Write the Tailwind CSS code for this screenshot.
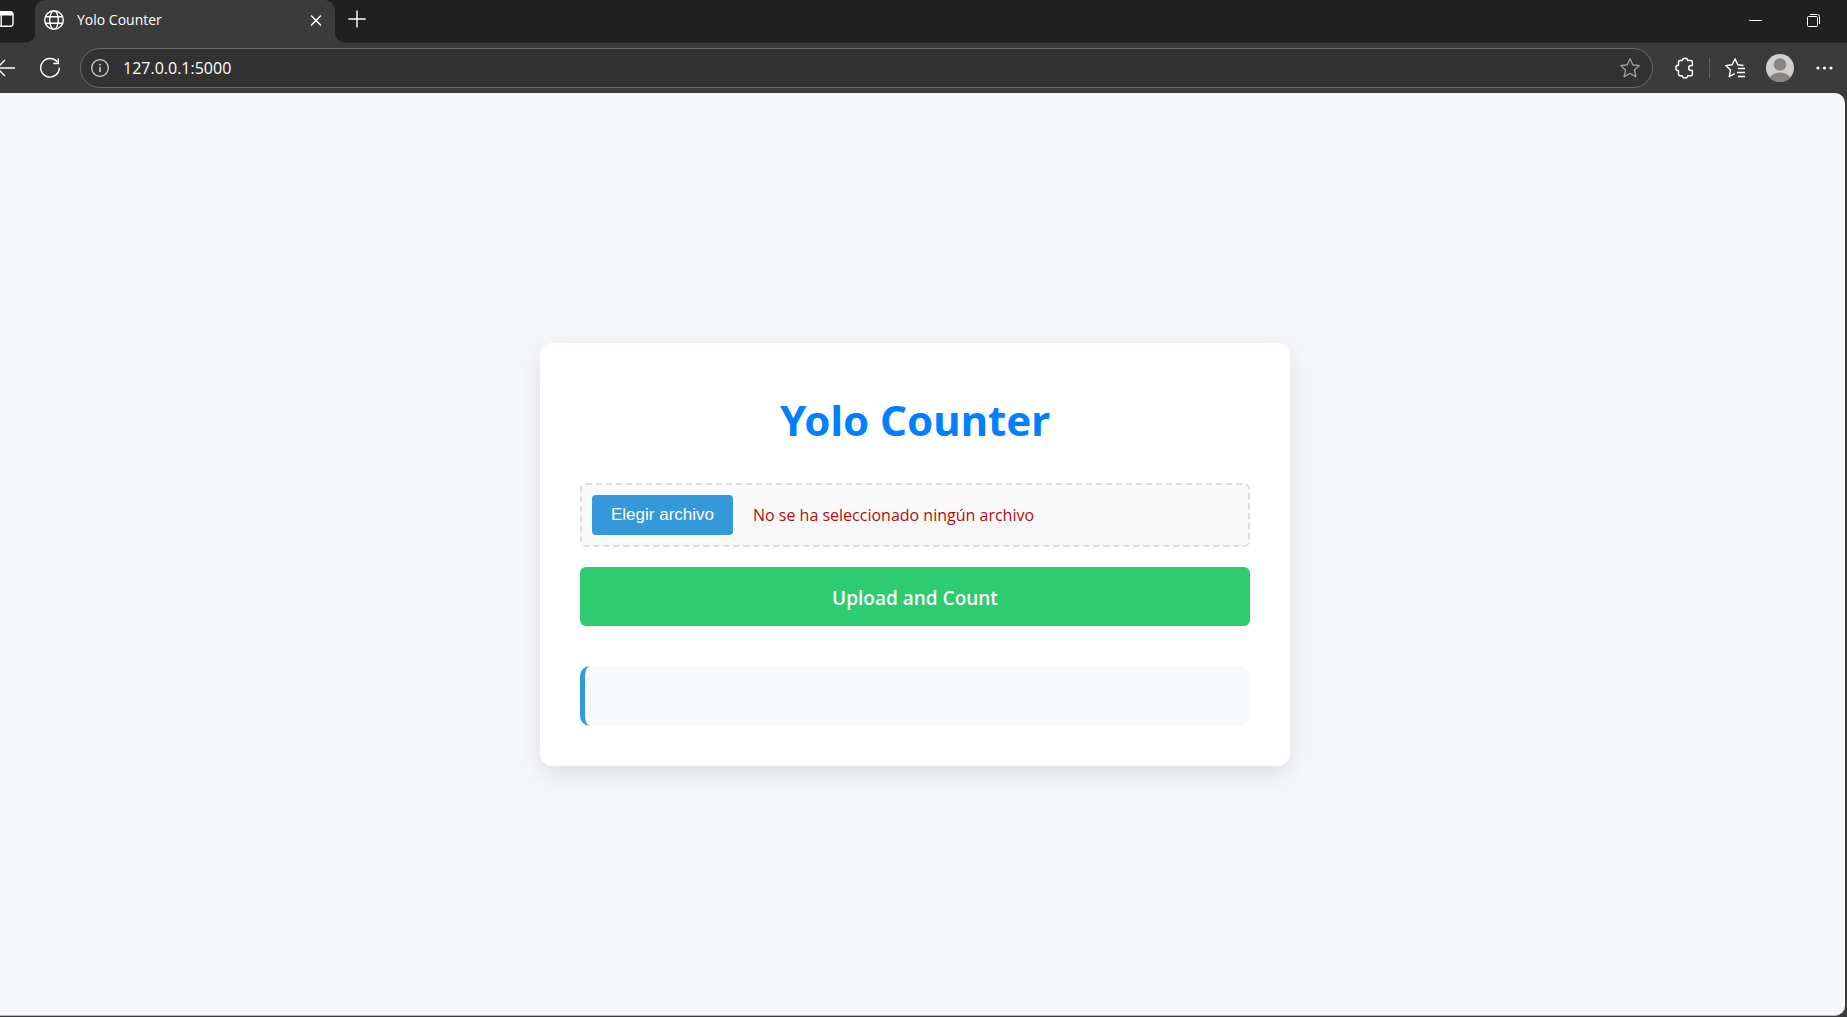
<!DOCTYPE html>
<html lang="es">
<head>
    <meta charset="UTF-8">
    <meta name="viewport" content="width=device-width, initial-scale=1.0">
    <title>Yolo Counter</title>
    <script src="https://cdn.jsdelivr.net/npm/@tailwindcss/browser@4"></script>
</head>
<body class="bg-[#3b3b3b] h-screen flex flex-col overflow-hidden font-['Open_Sans','Noto_Sans',sans-serif]">
    <header class="shrink-0 text-white">
        <!-- Tab strip -->
        <div class="flex h-[43px]">
            <div class="w-[35px] bg-[#202020] rounded-br-[10px] border-b border-[#2c2c2c] flex items-center">
                <button type="button" aria-label="Tab actions" class="pb-1">
                    <svg class="w-4 h-5" viewBox="0 0 16 20" fill="none" stroke="#fff" stroke-width="1.4">
                        <path d="M-3 2.7h13.5a2.500 2.500 0 0 1 2.500 2.500v9.600a2.500 2.500 0 0 1-2.500 2.500H-3"/>
                        <path d="M-3 3.800H12.500M-3 5.500H13" stroke-width="2"/>
                        <path d="M1.200 6v11"/>
                    </svg>
                </button>
            </div>
            <div class="w-[300px] bg-[#202020]">
                <div class="h-full bg-[#3b3b3b] rounded-t-[10px] flex items-center pl-2 pr-[11px] pb-[3px]">
                    <svg class="w-[22px] h-[22px]" viewBox="0 0 22 22" fill="none" stroke="#fff" stroke-width="1.4">
                        <circle cx="11" cy="11" r="9.300"/>
                        <ellipse cx="11" cy="11" rx="4.300" ry="9.300"/>
                        <path d="M2.500 7.700h17M2.500 14.300h17"/>
                    </svg>
                    <span class="ml-3 flex-1 text-[14px] leading-5">Yolo Counter</span>
                    <button type="button" aria-label="Close tab">
                        <svg class="w-4 h-4" viewBox="0 0 16 16" fill="none" stroke="#fff" stroke-width="1.5">
                            <path d="M3 3.500l10 10M13 3.500l-10 10"/>
                        </svg>
                    </button>
                </div>
            </div>
            <div class="flex-1 bg-[#202020] rounded-bl-[10px] border-b border-[#2c2c2c] flex items-center pl-3 pr-[26px] pb-1">
                <button type="button" aria-label="New tab">
                    <svg class="w-5 h-5" viewBox="0 0 20 20" fill="none" stroke="#fff" stroke-width="1.400">
                        <path d="M10 1.500v17M1.300 10h17.400"/>
                    </svg>
                </button>
                <button type="button" aria-label="Minimize" class="ml-auto">
                    <svg class="w-4 h-4" viewBox="0 0 16 16" fill="none" stroke="#fff">
                        <path d="M2 9.500h13"/>
                    </svg>
                </button>
                <button type="button" aria-label="Restore" class="ml-[42px]">
                    <svg class="w-4 h-4" viewBox="0 0 16 16" fill="none" stroke="#fff">
                        <rect x="2.500" y="5.500" width="10" height="10" rx="1"/>
                        <path d="M5 3.500h7.500a2 2 0 0 1 2 2V13"/>
                    </svg>
                </button>
            </div>
        </div>

        <!-- Toolbar -->
        <div class="flex items-center h-[50px] pr-[13px]">
            <button type="button" aria-label="Back">
                <svg class="w-4 h-5" viewBox="0 0 16 20" fill="none" stroke="#fff" stroke-width="1.400">
                    <path d="M15 10H-3M5 2l-8 8 8 8"/>
                </svg>
            </button>
            <button type="button" aria-label="Reload" class="ml-[23px]">
                <svg class="w-[22px] h-[22px]" viewBox="0 0 22 22" fill="none" stroke="#fff" stroke-width="1.400">
                    <path d="M18.500 5.300A9.300 9.300 0 1 0 20.300 10.500"/>
                    <path d="M19.300 1.500v5h-5"/>
                </svg>
            </button>
            <div class="ml-[19px] flex-1 h-10 rounded-full bg-[#323232] border border-[#6b6b6b] flex items-center pl-[9px] pr-[11px]">
                <svg class="w-5 h-5" viewBox="0 0 20 20" fill="none" stroke="#d6d6d6" stroke-width="1.300">
                    <circle cx="10" cy="10" r="8.300"/>
                    <path d="M10 9v5M10 6v1.600" stroke-width="1.500"/>
                </svg>
                <input type="text" value="127.0.0.1:5000" aria-label="Address" class="ml-[13px] flex-1 text-[16px] leading-6 outline-none">
                <button type="button" aria-label="Add to favorites">
                    <svg class="w-[22px] h-[22px]" viewBox="0 0 22 22" fill="none" stroke="#9d9d9d" stroke-width="1.400" stroke-linejoin="round">
                        <path d="M11 1.800l2.800 6 6.500.8-4.800 4.500 1.300 6.600L11 16.500l-5.800 3.200 1.300-6.600L1.700 8.600l6.500-.8z"/>
                    </svg>
                </button>
            </div>
            <button type="button" aria-label="Extensions" class="ml-[21px]">
                <svg class="w-[22px] h-[22px]" viewBox="0 0 22 22" fill="none" stroke="#fff" stroke-width="1.400" stroke-linejoin="round">
                    <path d="M8.300 3.500a2.700 2.200 0 0 1 5.400 0h3.200a1.500 1.500 0 0 1 1.500 1.500v3.500h-1.200a2.500 2.500 0 0 0 0 5h1.200v3.800a1.500 1.500 0 0 1-1.500 1.500h-3.200a2.700 2.200 0 0 1-5.400 0H6a1.500 1.500 0 0 1-1.500-1.500v-3.600a2.700 2.700 0 0 1 0-5.400V5A1.500 1.500 0 0 1 6 3.500z"/>
                </svg>
            </button>
            <div class="ml-[13px] w-px h-5 bg-[#5e5e5e]"></div>
            <button type="button" aria-label="Favorites" class="ml-[14px]">
                <svg class="w-[22px] h-[22px]" viewBox="0 0 22 22" fill="none" stroke="#fff" stroke-width="1.400" stroke-linejoin="round">
                    <path d="M19.500 8.500l-5.700-.7L11 1.800l-2.800 6-6.500.8 4.800 4.500-1.300 6.600 5.500-3"/>
                    <path d="M14 11.500h7M13 15.500h8M14 19.500h7"/>
                </svg>
            </button>
            <button type="button" aria-label="Profile" class="ml-5">
                <svg class="w-7 h-7 rounded-full bg-[#d2d0ce]" viewBox="0 0 28 28" fill="#8a8583">
                    <circle cx="14" cy="10.500" r="6.200"/>
                    <ellipse cx="14" cy="25.500" rx="10.500" ry="7"/>
                </svg>
            </button>
            <button type="button" aria-label="More" class="ml-5">
                <svg class="w-5 h-5" viewBox="0 0 20 20" fill="#fff">
                    <circle cx="4" cy="10" r="1.600"/>
                    <circle cx="10.500" cy="10" r="1.600"/>
                    <circle cx="17" cy="10" r="1.600"/>
                </svg>
            </button>
        </div>
    </header>

    <main class="flex-1 mr-0.5 mb-px pr-[15px] bg-[#f5f7fb] border-b border-[#b9b9bd] rounded-r-[10px] flex items-center justify-center">
        <div class="bg-white w-full max-w-[750px] p-10 rounded-xl shadow-[0_8px_24px_rgba(0,0,0,0.1)]">
            <h1 class="text-[42px] leading-[74px] mb-[26px] font-bold text-center text-[#007fff] font-['Noto_Sans',sans-serif]">Yolo Counter</h1>

            <form id="uploadForm" class="flex flex-col gap-5">
                <label for="file" class="flex items-center p-[10px] border-2 border-dashed border-[#ddd] rounded-md bg-[#f9f9f9] cursor-pointer">
                    <input type="file" id="file" name="file" class="sr-only">
                    <span class="h-10 px-[19px] flex items-center rounded bg-[#3498db] text-white text-[17px] leading-5 font-['Liberation_Sans',Arial,sans-serif]">Elegir archivo</span>
                    <span class="ml-5 text-[16px] leading-6 text-[#b50c0c]">No se ha seleccionado ningún archivo</span>
                </label>
                <button type="submit" class="h-[59px] pt-1 rounded-md bg-[#2ecc71] text-white text-[19px] leading-7 font-semibold">Upload and Count</button>
            </form>

            <div id="result" class="mt-10 h-[60px] border-l-[5px] border-[#3498db] rounded-[10px] bg-[#f8f9fb]"></div>
        </div>
    </main>
</body>
</html>
